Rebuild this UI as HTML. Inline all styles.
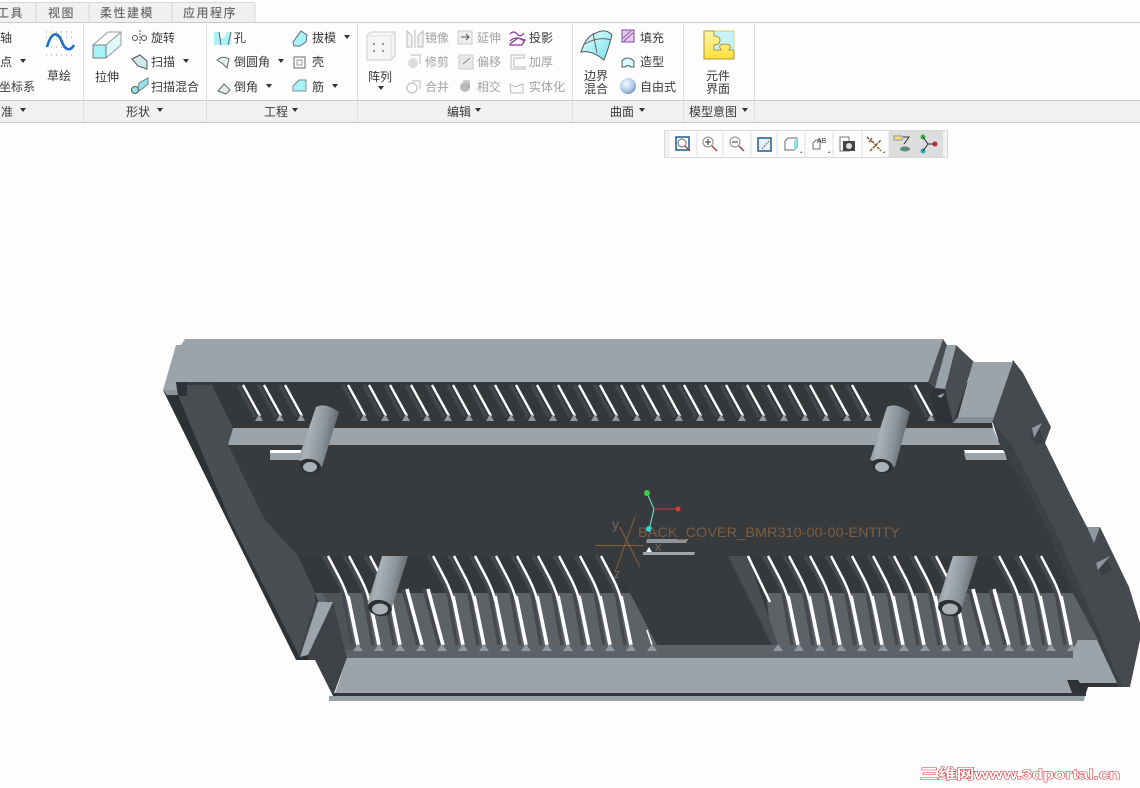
<!DOCTYPE html>
<html><head><meta charset="utf-8"><style>
html,body{margin:0;padding:0;background:#fdfdfd;width:1140px;height:788px;overflow:hidden}
svg{display:block}
text{font-family:"Liberation Sans","Noto Sans CJK SC",sans-serif}
.t{font-size:12px;fill:#3a3a3a}
.g{font-size:12px;fill:#a2a2a2}
.tab{font-size:12px;fill:#6c6c6c;letter-spacing:1.5px;font-weight:500}
</style></head><body>
<svg width="1140" height="788" viewBox="0 0 1140 788" xmlns="http://www.w3.org/2000/svg">
<defs>
<linearGradient id="cyl" x1="0" y1="0" x2="1" y2="0.25"><stop offset="0" stop-color="#6f7880"/><stop offset=".35" stop-color="#aab2b9"/><stop offset=".7" stop-color="#8a939a"/><stop offset="1" stop-color="#5f666c"/></linearGradient>
<linearGradient id="cy" x1="0" y1="0" x2="1" y2="1"><stop offset="0" stop-color="#eefdfd"/><stop offset="1" stop-color="#6fe4ec"/></linearGradient>
<linearGradient id="pz" x1="0" y1="0" x2="0" y2="1"><stop offset="0" stop-color="#fff6a8"/><stop offset="1" stop-color="#ffdf3a"/></linearGradient>
<radialGradient id="sph" cx=".4" cy=".35" r=".7"><stop offset="0" stop-color="#f6fbff"/><stop offset=".6" stop-color="#b5cdea"/><stop offset="1" stop-color="#6f8fb8"/></radialGradient>
<g id="st"><path d="M-5 385l17 32" stroke="#43474b" stroke-width="3.5" fill="none"/><path d="M0 385l17 31" stroke="#fff" stroke-width="2.400" fill="none"/><path d="M16 414l4 7h-8z" fill="#8f989f"/></g>
<g id="sb"><path d="M-5 556Q10 580 15 593L24 645" stroke="#45494d" stroke-width="3.500" fill="none"/><path d="M0 556L10 575Q18 590 20 600" stroke="#fff" stroke-width="2.500" fill="none"/><path d="M20 596L30 645" stroke="#fff" stroke-width="3.600" fill="none"/></g>
<g id="ss"><path d="M-4 589L11 645" stroke="#45494d" stroke-width="3.500" fill="none"/><path d="M0 589L15 645" stroke="#fff" stroke-width="3.600" fill="none"/></g>
<path id="tr" d="M0 644l5 7h-10z" fill="#8f989f"/>
</defs>
<rect width="1140" height="788" fill="#fdfdfd"/>

<!-- ribbon -->
<rect x="0" y="3" width="255" height="19" fill="#eff0f2"/>
<path d="M36 3v19M89 3v19M172 3v19M255 3v19M0 2.500h255" stroke="#d6d7d9" fill="none"/>
<rect x="0" y="22" width="1140" height="1" fill="#c9cacb"/>
<rect x="0" y="100" width="1140" height="22" fill="#f0f1f2"/>
<path d="M0 100.500H1140M0 122.500H1140" stroke="#c9cacb" fill="none"/>
<path d="M83.500 24V122M206.500 24V122M357.500 24V122M572.500 24V122M683.500 24V122M754.500 24V122" stroke="#dddedf" fill="none"/>
<text class="tab" x="-3" y="17">工具</text><text class="tab" x="48" y="17">视图</text><text class="tab" x="100" y="17">柔性建模</text><text class="tab" x="183" y="17">应用程序</text>

<text class="t" x="0" y="42">轴</text><text class="t" x="0" y="66">点</text><text class="t" x="-1" y="91">坐标系</text>
<text class="t" x="47" y="80">草绘</text><text class="t" x="95" y="81">拉伸</text>
<text class="t" x="151" y="42">旋转</text><text class="t" x="151" y="66">扫描</text><text class="t" x="151" y="91">扫描混合</text>
<text class="t" x="234" y="42">孔</text><text class="t" x="234" y="66">倒圆角</text><text class="t" x="234" y="91">倒角</text>
<text class="t" x="312" y="42">拔模</text><text class="t" x="312" y="66">壳</text><text class="t" x="312" y="91">筋</text>
<text class="t" x="368" y="81">阵列</text>
<text class="g" x="425" y="42">镜像</text><text class="g" x="425" y="66">修剪</text><text class="g" x="425" y="91">合并</text>
<text class="g" x="477" y="42">延伸</text><text class="g" x="477" y="66">偏移</text><text class="g" x="477" y="91">相交</text>
<text class="t" x="529" y="42">投影</text><text class="g" x="529" y="66">加厚</text><text class="g" x="529" y="91">实体化</text>
<text class="t" x="584" y="80">边界</text><text class="t" x="584" y="93">混合</text>
<text class="t" x="640" y="42">填充</text><text class="t" x="640" y="66">造型</text><text class="t" x="640" y="91">自由式</text>
<text class="t" x="706" y="80">元件</text><text class="t" x="706" y="93">界面</text>
<text class="t" x="1" y="116">准</text><text class="t" x="126" y="116">形状</text><text class="t" x="264" y="116">工程</text><text class="t" x="447" y="116">编辑</text><text class="t" x="610" y="116">曲面</text><text class="t" x="689" y="116">模型意图</text>
<path fill="#333" d="M20 108h6l-3 4zM157 108h6l-3 4zM292 108h6l-3 4zM475 108h6l-3 4zM639 108h6l-3 4zM742 108h6l-3 4zM20 59h6l-3 4zM183 59h6l-3 4zM278 59h6l-3 4zM266 84h6l-3 4zM344 35h6l-3 4zM332 84h6l-3 4zM378 86h6l-3 4z"/>

<!-- ribbon icons -->
<path stroke="#999" stroke-dasharray="1 4" d="M46 32H74M46 37H74M46 47H74M46 55H74" fill="none"/>
<path d="M47 47C52 30 58 32 62 42C65 50 70 52 74 45" stroke="#1f6fc4" stroke-width="2.600" fill="none"/>
<path d="M106 45L121 32V45L106 58Z" fill="#dff9fb"/>
<path d="M93 45h13v13H93z" fill="#a8f3f7" stroke="#777"/><path d="M93 45L108 32h13v13L106 58M106 45L121 32" fill="none" stroke="#999"/>
<circle cx="135" cy="38" r="2.500" fill="none" stroke="#555"/><circle cx="144" cy="38" r="2.500" fill="none" stroke="#555"/><path d="M140 30v15" stroke="#555" stroke-dasharray="2 1"/>
<path d="M132 59l8-4 7 6v8l-9-3z" fill="#cfe8ea" stroke="#555"/>
<path d="M139 83l9-5v6l-6 5-5 3z" fill="#8fe4ea" stroke="#777"/><circle cx="135" cy="90" r="3.500" fill="#8fe4ea" stroke="#555"/>
<path d="M214 32h5l2 6h3l3-6h4v13h-17z" fill="#a8f3f7"/><path d="M219 32l2 13M231 32l-3 13" stroke="#666" fill="none"/>
<path d="M217 60q6-5 12-1l-2 9-4-4z" fill="#e6eded" stroke="#666"/><path d="M218 91l6-7 6 6-4 4z" fill="#e6eded" stroke="#666"/>
<path d="M293 42l8-11 6 4-1 7-6 4h-6z" fill="#a8f3f7" stroke="#667"/>
<rect x="294" y="57" width="11" height="11" fill="#fff" stroke="#666"/><rect x="297" y="60" width="5" height="5" fill="#fff" stroke="#999"/>
<path d="M293 86l6-6h7v11h-13z" fill="#a8f3f7" stroke="#888"/>
<path d="M367 35l4-3h24v24l-4 4h-24z" fill="#f6f6f6" stroke="#ccc"/><path d="M391 36v24M391 36h-24M391 36l4-4" fill="none" stroke="#ddd"/><path d="M373 43h2v2h-2zM382 43h2v2h-2zM373 50h2v2h-2zM382 50h2v2h-2z" fill="#999"/>
<path d="M407 31l5 5v11h-5zM418 36l5-5v16h-5z" fill="#f2f2f2" stroke="#bbb"/><path d="M415 30v18" stroke="#bbb"/>
<circle cx="413" cy="63" r="5" fill="#ddd"/><path d="M411 55h9v9" fill="none" stroke="#bbb"/>
<circle cx="412" cy="88" r="5" fill="none" stroke="#bbb"/><path d="M412 81h8v8" fill="none" stroke="#bbb"/>
<rect x="458" y="31" width="14" height="13" fill="#eee" stroke="#ccc"/><path d="M461 37h8M466 34l3 3-3 3" stroke="#555" fill="none"/>
<rect x="459" y="55" width="14" height="14" fill="#e8e8e8" stroke="#ccc"/><path d="M463 64l7-6" stroke="#888"/>
<circle cx="465" cy="87" r="5" fill="#bbb"/><path d="M463 81h6v7" stroke="#999" fill="none"/>
<path d="M510 34q4-4 7 0t7-1M510 44l8-6 7 2-3 5h-12zM510 41q6-6 14 0" stroke="#8a3d9c" fill="none" stroke-width="1.300"/>
<path d="M511 55h13v3h-10v9h11v2h-14z" fill="none" stroke="#bbb"/>
<path d="M510 84l5 3 8-3v9h-12z" fill="none" stroke="#bbb"/>
<path d="M581 52Q586 36 596 33Q606 28 612 35Q608 50 604 60Q592 50 581 52Z" fill="url(#cy)" stroke="#555"/><path d="M593 33l4 20M585 44Q598 36 611 40" stroke="#666" fill="none"/>
<rect x="622" y="30" width="12" height="12" fill="#e4c9ee" stroke="#7a4a96"/><path d="M623 38l8-7M624 41l9-8" stroke="#8a5aa6"/>
<path d="M622 67v-6q5-6 12 0v6h-3q-3-3-6 0z" fill="#d8fbfd" stroke="#555"/>
<circle cx="628" cy="86" r="8" fill="url(#sph)"/>
<rect x="704" y="31" width="30" height="28" fill="#c8f2f6" stroke="#d8c550" stroke-width=".8"/>
<path d="M704 31H714V36Q720 36 720 40Q720 45 714 45V50H721Q717 44 725 44Q733 44 729 50H734V59H704Z" fill="url(#pz)" stroke="#8f8230" stroke-width=".8"/>

<!-- toolbar -->
<rect x="664.500" y="130.500" width="283" height="27" fill="#f1f2f3" stroke="#d8d9da"/>
<rect x="670" y="131" width="273" height="26" fill="#fdfdfd"/>
<rect x="889" y="131" width="27" height="26" fill="#dcdddd"/><rect x="916" y="131" width="27" height="26" fill="#dcdddd"/>
<path d="M697 131v26M723 131v26M751 131v26M777 131v26M805 131v26M833 131v26M862 131v26M889 131v26M916 131v26" stroke="#dfe0e1"/>
<rect x="676" y="137" width="13" height="13" fill="#fff" stroke="#1f5a86" stroke-width="1.500"/><circle cx="682" cy="143" r="4" fill="none" stroke="#666"/><path d="M685 146l5 5" stroke="#a44" stroke-width="1.500"/>
<circle cx="708" cy="142" r="5" fill="#fff" stroke="#888"/><path d="M705 142h6M708 139v6" stroke="#333"/><path d="M712 146l5 5" stroke="#a44" stroke-width="1.500"/>
<circle cx="735" cy="142" r="5" fill="#fff" stroke="#888"/><path d="M732 142h6" stroke="#333"/><path d="M739 146l5 5" stroke="#a44" stroke-width="1.500"/>
<rect x="758" y="138" width="13" height="13" fill="#eaf1fa" stroke="#1f5a86" stroke-width="1.500"/><path d="M762 149l7-8" stroke="#666" stroke-dasharray="2 1"/>
<path d="M785 141l3-3h9v9l-3 3h-9z" fill="#fff" stroke="#666"/><path d="M794 141h3v-3zM794 141v9l3-3v-6z" fill="#8fe4ea"/><path d="M800 153h2v-2z" fill="#555"/>
<path d="M813 143l3-3h4v9h-7z" fill="#fff" stroke="#666"/><text x="817" y="143" font-size="7" fill="#333">AB</text><path d="M828 153h2v-2z" fill="#555"/>
<rect x="840" y="137" width="9" height="14" fill="#fff" stroke="#777"/><rect x="843" y="141" width="12" height="10" fill="#444"/><circle cx="849" cy="146" r="3" fill="#ddd"/>
<path d="M867 137l5 5M872 138l-3 4M870 151l11-11M872 141l9 10" stroke="#7a4a20" stroke-width="1.300" stroke-dasharray="3 1"/><path d="M883 153h2v-2z" fill="#555"/>
<rect x="894" y="136" width="8" height="4" fill="#f4e27a" stroke="#999"/><path d="M903 137h6l-5 7" fill="none" stroke="#333"/><ellipse cx="905" cy="149" rx="5" ry="2.500" fill="#5f8c7f"/>
<circle cx="923" cy="137" r="2.500" fill="#35b04a"/><circle cx="923" cy="151" r="2.500" fill="#30a8c0"/><circle cx="935" cy="144" r="2.500" fill="#c02a38"/><path d="M923 137l5 7h6M928 144l-5 7" stroke="#333" fill="none"/>

<!-- main dark body -->
<path fill="#383b3e" d="M176 382H930L985 423L1045 500L1100 640V658H330L296 660L163 390Z"/>
<path fill="#35383b" d="M212 382H985V428H232Z"/>
<path fill="#35383b" d="M298 556H612L630 593H315Z"/>
<path fill="#35383b" d="M748 556H1050L1073 593H766Z"/>
<path fill="#2e3134" d="M163 390L178 395L300 650L297 660Z"/>

<!-- outer right wall -->
<path fill="#464a4e" d="M1013 360L1023 373L1051 427L1045 443L1073 500L1087 527L1100 527L1129 587L1140 623V640L1130 687H1117L1097 640L1033 500L1000 445L993 423L985 420Z"/>
<path fill="#3d4145" d="M993 423L1000 445L1033 500L1097 640L1117 687H1122L1062 545L1012 445Z"/>
<path fill="#3c4044" d="M1045 443L1040 430L1034 425L1030 436L1036 445ZM1112 570L1102 576L1096 563L1106 557Z"/>
<path fill="#8f989f" d="M1032 428L1042 423L1034 438ZM1096 563L1110 556L1098 570ZM1087 527H1100L1094 543Z"/>

<!-- left wall -->
<path fill="#4a4e52" d="M187 385H212L233 428L228 445L265 520L298 556L315 593V655L300 657L230 520L178 395Z"/>
<path fill="#2f3236" d="M176 382H187V396H178L177 390Z"/>

<!-- mid grey floor -->
<path fill="#5d6267" d="M315 593H630L657 645H772L766 593H1073L1098 640L1073 658H345L335 640Z"/>
<path fill="#4a4e52" d="M728 556H748L778 645H772Z"/>
<path fill="#4f5358" d="M323 593H340L357 650H345Z"/>

<!-- top slots -->
<g>
<use href="#st" x="243"/><use href="#st" x="264"/><use href="#st" x="285"/>
<use href="#st" x="348"/><use href="#st" x="369"/><use href="#st" x="390"/><use href="#st" x="411"/><use href="#st" x="432"/><use href="#st" x="453"/><use href="#st" x="474"/><use href="#st" x="495"/><use href="#st" x="516"/><use href="#st" x="537"/><use href="#st" x="558"/><use href="#st" x="579"/><use href="#st" x="600"/><use href="#st" x="621"/><use href="#st" x="642"/><use href="#st" x="663"/><use href="#st" x="684"/><use href="#st" x="705"/><use href="#st" x="726"/><use href="#st" x="747"/><use href="#st" x="768"/><use href="#st" x="789"/><use href="#st" x="810"/><use href="#st" x="831"/><use href="#st" x="852"/><use href="#st" x="915"/>
</g>

<!-- top wall -->
<path fill="#9ba4ab" d="M185 339H943L928 382H176L177 390H163L176 345H181Z"/>
<path fill="#a1a5a8" d="M185 339H943L942 342H184Z"/>
<path fill="#8b949b" d="M163 390H177L178 395H167Z"/>
<path fill="#4a4e52" d="M943 339L947 345L935 388L928 382Z"/>
<path fill="#4a4e52" d="M956 345L974 362L953 423H940L945 389Z"/>
<path fill="#99a2a9" d="M947 345H956L945 389L935 388Z"/>
<path fill="#2f3236" d="M935 388L945 389L953 423H938L930 395Z"/>
<path fill="#99a2a9" d="M937 396L945 393L941 398Z"/>
<path fill="#9ba4ab" d="M973 362H1013L994 417H958Z"/>
<path fill="#868f96" d="M958 417H994L992 423H953Z"/>

<!-- crossbar -->
<path fill="#9ba4ab" d="M233 428H993L1000 445H228Z"/>
<path fill="#34373a" d="M953 423H992L993 428H953Z"/>
<path fill="#9ba4ab" d="M270 453H303V460H270ZM964 453H1005L1007 460H966Z"/>
<path fill="#fff" d="M270 450H303V453H270ZM964 450H1003L1005 453H965Z"/>

<!-- bottom slots -->
<g>
<use href="#sb" x="328"/><use href="#sb" x="349"/><use href="#sb" x="370"/>
<use href="#ss" x="407"/><use href="#ss" x="428"/>
<use href="#sb" x="433"/><use href="#sb" x="454"/><use href="#sb" x="475"/><use href="#sb" x="496"/><use href="#sb" x="517"/><use href="#sb" x="538"/><use href="#sb" x="559"/><use href="#sb" x="580"/><use href="#sb" x="601"/>
<use href="#sb" x="768"/><use href="#sb" x="789"/><use href="#sb" x="810"/><use href="#sb" x="831"/><use href="#sb" x="852"/><use href="#sb" x="873"/><use href="#sb" x="894"/><use href="#sb" x="915"/><use href="#sb" x="936"/>
<use href="#ss" x="973"/><use href="#ss" x="994"/>
<use href="#sb" x="999"/><use href="#sb" x="1020"/><use href="#sb" x="1041"/>
</g>
<path d="M748 556L770 602" stroke="#fff" stroke-width="2.500" fill="none"/>
<path d="M647 630L652 645" stroke="#fff" stroke-width="1.500" fill="none"/>
<g>
<use href="#tr" x="358"/><use href="#tr" x="379"/><use href="#tr" x="400"/><use href="#tr" x="421"/><use href="#tr" x="442"/><use href="#tr" x="463"/><use href="#tr" x="484"/><use href="#tr" x="505"/><use href="#tr" x="526"/><use href="#tr" x="547"/><use href="#tr" x="568"/><use href="#tr" x="589"/><use href="#tr" x="610"/><use href="#tr" x="631"/><use href="#tr" x="652"/>
<use href="#tr" x="778"/><use href="#tr" x="799"/><use href="#tr" x="820"/><use href="#tr" x="841"/><use href="#tr" x="862"/><use href="#tr" x="883"/><use href="#tr" x="904"/><use href="#tr" x="925"/><use href="#tr" x="946"/><use href="#tr" x="967"/><use href="#tr" x="988"/><use href="#tr" x="1009"/><use href="#tr" x="1030"/><use href="#tr" x="1051"/><use href="#tr" x="1072"/>
</g>

<!-- left lower block -->
<path fill="#3f4347" d="M315 602L333 602L347 658L333 696L315 660H297Z"/>
<path fill="#9ba4ab" d="M318 602H333L308 655L300 657Z"/>
<path fill="#2c2f32" d="M297 657L300 657L308 655V660H297Z"/>

<!-- front wall -->
<path fill="#9ba4ab" d="M347 658H1073V650L1078 640H1097L1117 683H1078L1067 680L1072 693H335Z"/>
<path fill="#2f3236" d="M1067 680H1078L1080 683H1117V687H1088L1085 696L1072 693Z"/>
<path fill="#33363a" d="M333 693H1086V696H333Z"/>
<path fill="#97a0a7" d="M329 696H1085L1084 701H329Z"/>

<!-- cylinders -->
<path fill="url(#cyl)" d="M316 407Q325 402 339 412L322 467L298 460Z"/><ellipse cx="310" cy="466" rx="11" ry="7" transform="rotate(10 310 466)" fill="#2d3033"/><ellipse cx="310" cy="467" rx="7" ry="5" fill="#a9b1b7"/>
<path fill="url(#cyl)" d="M887 407Q896 402 910 412L895 467L870 460Z"/><ellipse cx="882" cy="466" rx="11" ry="7" transform="rotate(10 882 466)" fill="#2d3033"/><ellipse cx="882" cy="467" rx="7" ry="5" fill="#a9b1b7"/>
<path fill="url(#cyl)" d="M382 556H408L392 607L368 602Z"/><ellipse cx="380" cy="608" rx="12" ry="8" transform="rotate(10 380 608)" fill="#2d3033"/><ellipse cx="380" cy="609" rx="8" ry="5.500" fill="#a9b1b7"/>
<path fill="url(#cyl)" d="M953 556H978L962 607L938 602Z"/><ellipse cx="950" cy="608" rx="12" ry="8" transform="rotate(10 950 608)" fill="#2d3033"/><ellipse cx="950" cy="609" rx="8" ry="5.500" fill="#a9b1b7"/>

<!-- annotations -->
<path d="M647 539H688L686 543H646Z" fill="#8f959a"/><path d="M643 552H695L694 555H643Z" fill="#a0a6ab"/>
<path d="M646 552l3-5 3 5z" fill="#fff"/>
<g stroke="#8a6038" fill="none"><path d="M595 545.500H643M620 527L640 567M635 517L615 572"/></g>
<path d="M647 493L654 509L649 530" stroke="#7ae6d0" fill="none"/><path d="M655 509H678" stroke="#c23a42"/>
<circle cx="647" cy="493" r="3" fill="#3cd03c"/><circle cx="678" cy="509" r="2.500" fill="#e03838"/><circle cx="649" cy="529" r="3" fill="#30d8d8"/>
<text x="612" y="529" font-size="14" fill="#6d6a68">y</text><text x="614" y="578" font-size="13" fill="#6d6a68">z</text><text x="655" y="551" font-size="13" fill="#6d6a68">x</text>
<text x="638" y="537" font-size="14" fill="#7d5c40" textLength="262" lengthAdjust="spacingAndGlyphs">BACK_COVER_BMR310-00-00-ENTITY</text>

<!-- watermark -->
<text x="920" y="779" font-size="14" font-weight="bold" fill="#fff" stroke="#d9373f" stroke-width="1" textLength="200" lengthAdjust="spacingAndGlyphs" style="paint-order:stroke">三维网www.3dportal.cn</text>
</svg>
</body></html>
